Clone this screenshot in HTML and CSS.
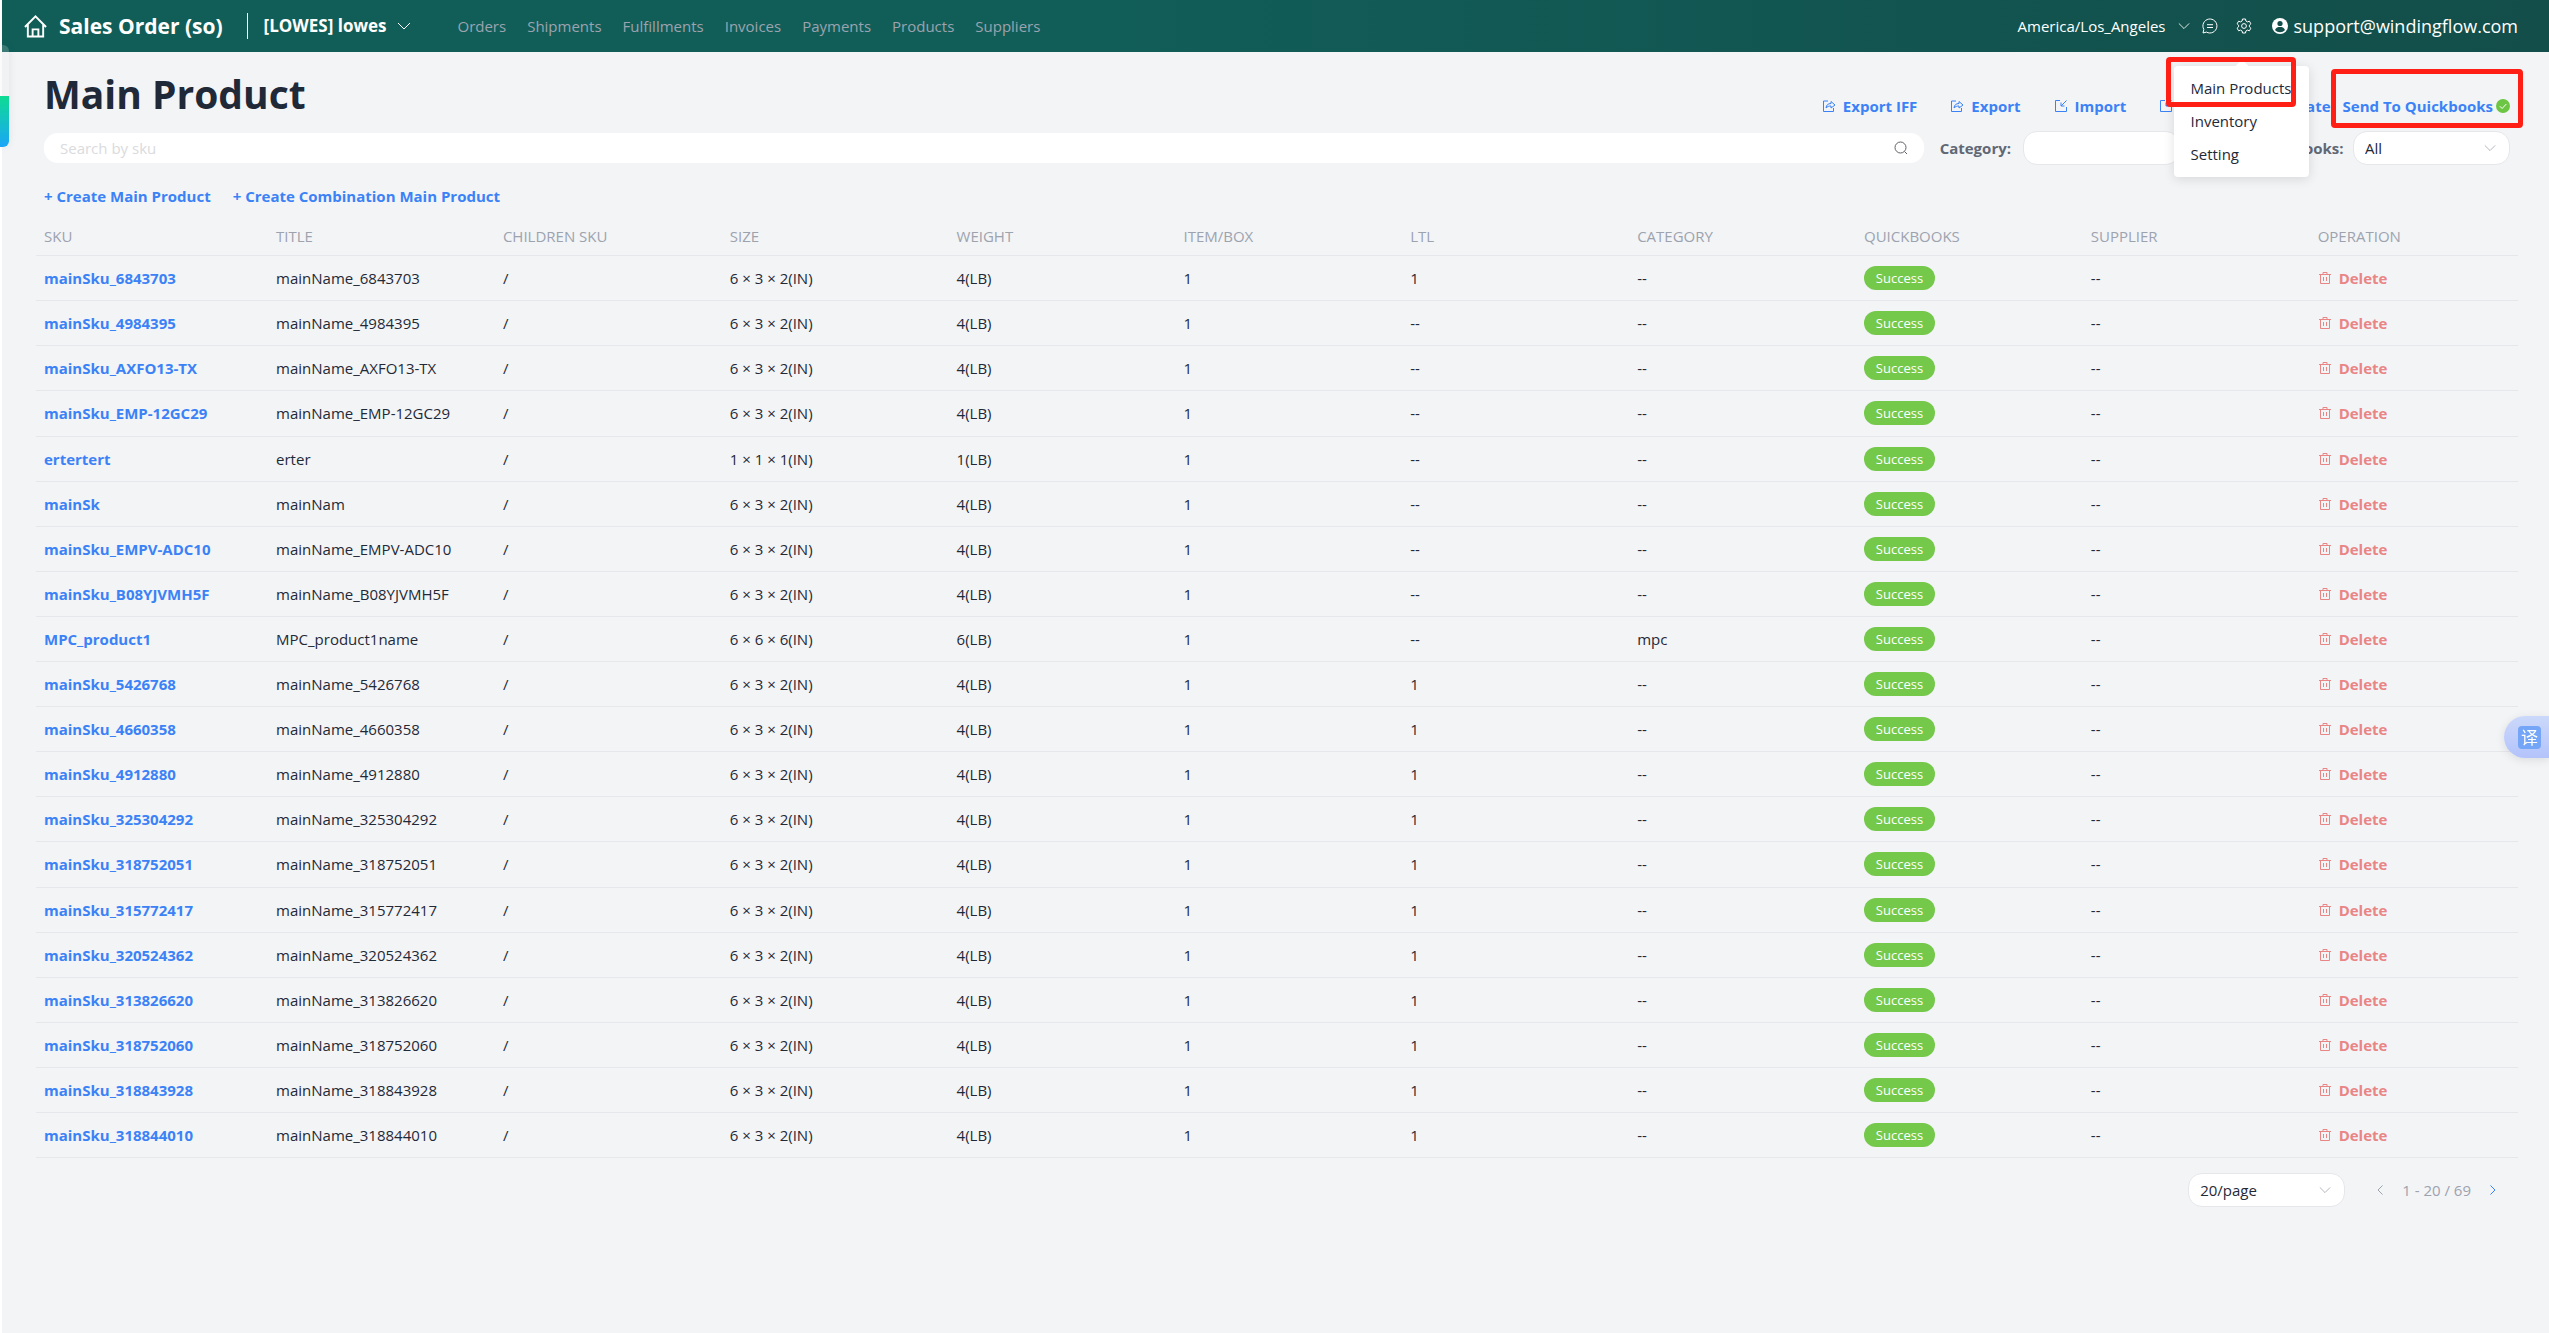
FILE: index.html
```html
<!DOCTYPE html>
<html lang="en">
<head>
<meta charset="utf-8">
<meta name="viewport" content="width=device-width, initial-scale=1">
<title>Main Product</title>
<link rel="stylesheet" href="styles.css">
</head>
<body>
<svg class="sprite" aria-hidden="true">
  <symbol id="i-down" viewBox="0 0 14 14"><path d="M1 4l6 6 6-6"/></symbol>
  <symbol id="i-left" viewBox="0 0 14 14"><path d="M9.500 2.500L5 7l4.500 4.500"/></symbol>
  <symbol id="i-right" viewBox="0 0 14 14"><path d="M4.500 2.500L9 7l-4.500 4.500"/></symbol>
  <symbol id="i-export" viewBox="0 0 14 14"><path d="M6 2H1.500v10.500h10V9M4 9c.3-3 2-4.500 5-4.500V2.500L13 6 9 9V7C7 7 5.300 7.500 4 9z"/></symbol>
  <symbol id="i-import" viewBox="0 0 14 14"><path d="M6 1.500H1.500v11h11V8M12.500 1.500L7 7M7 3.500V7h3.500"/></symbol>
  <symbol id="i-trash" viewBox="0 0 14 14"><path d="M1 3.500h12M5 3.300V1.500h4v1.800M2.500 3.500v9h9v-9M5.500 6v4M8.500 6v4"/></symbol>
</svg>

<header class="topbar">
  <a class="brand" href="#">
    <svg class="icon home" viewBox="0 0 24 24" aria-hidden="true"><path d="M1 12.500L12 1.500l11 11M4 10v12.500h16V10M9 22.500V15h6v7.500"/></svg>
    <span>Sales Order (so)</span>
  </a>
  <button class="store" type="button">[LOWES] lowes <svg class="icon"><use href="#i-down"/></svg></button>
  <nav class="nav">
    <a href="#">Orders</a><a href="#">Shipments</a><a href="#">Fulfillments</a><a href="#">Invoices</a><a href="#">Payments</a><a href="#">Products</a><a href="#">Suppliers</a>
  </nav>
  <div class="tools">
    <button class="zone" type="button">America/Los_Angeles <svg class="icon chev"><use href="#i-down"/></svg></button>
    <button class="tool" type="button" aria-label="Messages">
      <svg class="icon round" viewBox="0 0 16 16"><path d="M1 15l.8-3.600A7 7 0 1 1 4.500 14.100zM5 6.700h6M5 9.500h6"/></svg>
    </button>
    <div class="settings">
      <button class="tool" type="button" aria-label="Settings">
        <svg class="icon round" viewBox="0 0 16 16"><path d="M6.500 1h3l.4 2 1.500.9 2-.7 1.500 2.600L13.400 7.200v1.600l1.500 1.400-1.500 2.600-2-.7-1.500.9-.4 2h-3l-.4-2-1.500-.9-2 .7-1.500-2.600 1.500-1.400V7.200L1.100 5.800l1.500-2.600 2 .7L6.100 3z"/><circle cx="8" cy="8" r="2.400"/></svg>
      </button>
      <div class="menu">
        <a href="#">Main Products</a>
        <a href="#">Inventory</a>
        <a href="#">Setting</a>
        <span class="mark mark-menu"></span>
      </div>
    </div>
    <a class="account" href="#">
      <svg class="avatar" viewBox="0 0 16 16" aria-hidden="true"><circle cx="8" cy="8" r="8"/><circle class="cut" cx="8" cy="5.500" r="2.600"/><path class="cut" d="M3 12c1-2.500 3-3 5-3s4 .5 5 3c-1.500 1.500-3 2.200-5 2.200S4.500 13.500 3 12z"/></svg>
      <span>support@windingflow.com</span>
    </a>
  </div>
</header>

<main class="page">
  <div class="heading">
    <h1>Main Product</h1>
    <div class="actions">
      <button class="link" type="button"><svg class="icon"><use href="#i-export"/></svg>Export IFF</button>
      <button class="link" type="button"><svg class="icon"><use href="#i-export"/></svg>Export</button>
      <button class="link" type="button"><svg class="icon"><use href="#i-import"/></svg>Import</button>
      <button class="link" type="button"><svg class="icon"><use href="#i-import"/></svg>Download Template</button>
      <button class="link send" type="button">Send To Quickbooks<svg class="ok" viewBox="0 0 14 14"><circle cx="7" cy="7" r="7"/><path d="M3.800 7.200l2.300 2.300 4.200-4.500"/></svg><span class="mark mark-send"></span></button>
    </div>
  </div>

  <div class="filters">
    <div class="search">
      <input type="text" placeholder="Search by sku" aria-label="Search by sku">
      <svg class="icon" viewBox="0 0 14 14" aria-hidden="true"><circle cx="6.500" cy="6.500" r="5.500"/><path d="M10.500 10.500l2.500 2.500"/></svg>
    </div>
    <label for="category">Category:</label>
    <span class="picker"><select id="category"><option></option></select></span>
    <label class="qb" for="quickbooks">Quickbooks:</label>
    <span class="picker"><select id="quickbooks"><option>All</option></select><svg class="icon"><use href="#i-down"/></svg></span>
  </div>

  <div class="create">
    <button class="link" type="button">+ Create Main Product</button>
    <button class="link" type="button">+ Create Combination Main Product</button>
  </div>

  <table class="grid">
    <thead>
      <tr><th class="first">SKU</th><th>TITLE</th><th>CHILDREN SKU</th><th>SIZE</th><th>WEIGHT</th><th>ITEM/BOX</th><th>LTL</th><th>CATEGORY</th><th>QUICKBOOKS</th><th>SUPPLIER</th><th class="last">OPERATION</th></tr>
    </thead>
    <tbody id="rows"></tbody>
  </table>

  <footer class="pager">
    <span class="picker"><select aria-label="Rows per page"><option>20/page</option></select><svg class="icon"><use href="#i-down"/></svg></span>
    <div class="range">
      <button type="button" aria-label="Previous page" disabled><svg class="icon"><use href="#i-left"/></svg></button>
      <span>1 - 20 / 69</span>
      <button class="next" type="button" aria-label="Next page"><svg class="icon"><use href="#i-right"/></svg></button>
    </div>
  </footer>
</main>

<div class="side-tab"></div>
<button class="translate" type="button" aria-label="Translate"><span>译</span></button>
<script src="rows.js"></script>
</body>
</html>
```
FILE: styles.css
```css
* { box-sizing: border-box; }

body {
  margin: 0;
  min-height: 100vh;
  border-left: 2px solid #fff;
  background: #f3f4f6;
  color: #1f2937;
  font: 15px/24px "Open Sans", "Noto Sans", "Noto Sans CJK SC", sans-serif;
}

a { color: inherit; text-decoration: none; }

button, input, select {
  margin: 0;
  padding: 0;
  border: 0;
  background: none;
  color: inherit;
  font: inherit;
}

.sprite { display: none; }

.icon {
  flex: none;
  width: 14px;
  height: 14px;
  fill: none;
  stroke: currentColor;
  stroke-width: 1;
}

/* Top bar */
.topbar {
  display: flex;
  align-items: center;
  height: 52px;
  padding: 0 31px 0 22px;
  background: linear-gradient(90deg, #115e59 40%, #134e4a);
  color: #fff;
}

.brand {
  display: flex;
  align-items: center;
  gap: 12px;
  height: 26px;
  padding-right: 24px;
  border-right: 1px solid #fff;
  font-size: 21px;
  font-weight: 700;
}

.brand .home { width: 23px; height: 23px; stroke-width: 2; }

.store {
  display: flex;
  align-items: center;
  gap: 11px;
  margin-left: 16px;
  font-size: 17px;
  font-weight: 700;
}

.nav {
  display: flex;
  gap: 21px;
  margin-left: 46px;
  color: #9ca3af;
}

.tools {
  display: flex;
  align-items: center;
  gap: 18px;
  margin-left: auto;
}

.zone { display: flex; align-items: center; gap: 12px; margin-right: -6px; }
.chev { width: 12px; height: 12px; }
.tool { display: flex; }
.tool .round { width: 16px; height: 16px; }
.settings { position: relative; }

.account {
  display: flex;
  align-items: center;
  gap: 6px;
  margin-left: 2px;
  font-size: 18px;
}

.avatar { width: 16px; height: 16px; fill: #fff; }
.avatar .cut { fill: #134e4a; }

/* Settings menu opens below the gear */
.menu {
  position: absolute;
  z-index: 2;
  top: 48px;
  left: -62px;
  display: flex;
  flex-direction: column;
  width: 135px;
  padding: 6px 0;
  border-radius: 4px;
  background: #fff;
  box-shadow: 0 2px 12px rgba(0, 0, 0, .12);
  color: #1f2937;
  line-height: 23px;
}

.menu::before {
  content: "";
  position: absolute;
  top: -4px;
  left: 62px;
  width: 12px;
  height: 12px;
  border-radius: 2px;
  background: #fff;
  transform: rotate(45deg);
}

.menu a { position: relative; padding: 5px 0 5px 17px; white-space: nowrap; }

.mark {
  position: absolute;
  border: 5px solid #ff1f14;
  border-radius: 4px;
  pointer-events: none;
}

.mark-menu { inset: -9px 13px 70px -8px; }
.mark-send { inset: -25px -13px -10px -12px; }

/* Page */
.page { padding: 10px 31px 24px 34px; }

.heading {
  display: flex;
  align-items: flex-start;
  justify-content: space-between;
  padding: 0 8px;
}

h1 { margin: 0; font-size: 39px; line-height: 64px; }

.link {
  display: flex;
  align-items: center;
  gap: 7px;
  color: #3b82f6;
  font-weight: 700;
  white-space: nowrap;
}

.actions { display: flex; gap: 33px; padding-top: 32px; }
.send { position: relative; gap: 3px; margin-left: -21px; }
.ok { width: 14px; height: 14px; fill: #6cc644; }
.ok path { fill: none; stroke: #fff; stroke-width: 1; }

.filters {
  display: flex;
  align-items: center;
  height: 44px;
  padding: 0 8px;
}

.search {
  display: flex;
  flex: 1;
  align-items: center;
  height: 30px;
  margin-right: 16px;
  padding: 0 16px;
  border-radius: 14px;
  background: #fff;
  color: #606266;
}

.search input { flex: 1; outline: 0; }
.search input::placeholder { color: #d9dbde; opacity: 1; }

.filters label { margin-right: 12px; color: #606875; font-weight: 700; }
.filters .qb { width: 90px; margin-left: 71px; }

.picker {
  display: flex;
  align-items: center;
  width: 157px;
  height: 34px;
  padding: 0 13px 0 11px;
  border: 1px solid #e5e7eb;
  border-radius: 14px;
  background: #fff;
}

.picker select { flex: 1; appearance: none; outline: 0; }
.picker .icon { width: 12px; height: 12px; color: #a8abb2; }

.create { display: flex; gap: 22px; padding: 14px 8px 9px; }

/* Product table */
.grid {
  width: 100%;
  border-collapse: collapse;
  table-layout: fixed;
}

.grid th, .grid td {
  height: 45px;
  padding: 0 8px;
  border-bottom: 1px solid #e5e7eb;
  text-align: left;
}

.grid thead th {
  height: 38px;
  width: 9.140%;
  color: #9ca3af;
  font-weight: 400;
}

.grid th.first { width: 9.350%; }
.grid th.last { width: auto; }
.grid td a { color: #3b82f6; font-weight: 700; }
.grid tr:nth-child(10n+4) td { height: 46px; }

.tag {
  display: block;
  width: 71px;
  border-radius: 12px;
  background: #74c84a;
  color: #fff;
  font-size: 13px;
  text-align: center;
}

.delete {
  display: flex;
  align-items: center;
  gap: 7px;
  color: #e98585;
  font-weight: 700;
}

/* Pager */
.pager {
  display: flex;
  align-items: center;
  justify-content: flex-end;
  padding: 15px 18px 0 0;
}

.range {
  display: flex;
  align-items: center;
  gap: 15px;
  margin-left: 28px;
  color: #9ca3af;
}

.range button { display: flex; }
.range .next { color: #3b82f6; }

/* Floating widgets at the window edges */
.side-tab {
  position: fixed;
  top: 45px;
  left: 0;
  width: 9px;
  height: 102px;
  border-radius: 0 6px 6px 0;
  background: linear-gradient(#e9eaec33 51px, #0edc93 51px, #1aa5f8);
  box-shadow: 0 0 8px rgba(0, 0, 0, .08);
}

.translate {
  position: fixed;
  top: 716px;
  right: 0;
  display: flex;
  align-items: center;
  width: 45px;
  height: 42px;
  padding-left: 14px;
  border-radius: 21px 0 0 21px;
  background: linear-gradient(#cbd8fb, #b3c3fb);
  box-shadow: 0 2px 10px rgba(0, 0, 0, .1);
}

.translate span {
  width: 23px;
  border-radius: 4px;
  background: #74a5f6;
  color: #fff;
  font-size: 17px;
  line-height: 23px;
  text-align: center;
}
```
FILE: rows.js
```js
const S = "6 × 3 × 2(IN)";
const products = [
  ["mainSku_6843703", "mainName_6843703", S, "4(LB)", "1"],
  ["mainSku_4984395", "mainName_4984395", S, "4(LB)", "--"],
  ["mainSku_AXFO13-TX", "mainName_AXFO13-TX", S, "4(LB)", "--"],
  ["mainSku_EMP-12GC29", "mainName_EMP-12GC29", S, "4(LB)", "--"],
  ["ertertert", "erter", "1 × 1 × 1(IN)", "1(LB)", "--"],
  ["mainSk", "mainNam", S, "4(LB)", "--"],
  ["mainSku_EMPV-ADC10", "mainName_EMPV-ADC10", S, "4(LB)", "--"],
  ["mainSku_B08YJVMH5F", "mainName_B08YJVMH5F", S, "4(LB)", "--"],
  ["MPC_product1", "MPC_product1name", "6 × 6 × 6(IN)", "6(LB)", "--", "mpc"],
  ["mainSku_5426768", "mainName_5426768", S, "4(LB)", "1"],
  ["mainSku_4660358", "mainName_4660358", S, "4(LB)", "1"],
  ["mainSku_4912880", "mainName_4912880", S, "4(LB)", "1"],
  ["mainSku_325304292", "mainName_325304292", S, "4(LB)", "1"],
  ["mainSku_318752051", "mainName_318752051", S, "4(LB)", "1"],
  ["mainSku_315772417", "mainName_315772417", S, "4(LB)", "1"],
  ["mainSku_320524362", "mainName_320524362", S, "4(LB)", "1"],
  ["mainSku_313826620", "mainName_313826620", S, "4(LB)", "1"],
  ["mainSku_318752060", "mainName_318752060", S, "4(LB)", "1"],
  ["mainSku_318843928", "mainName_318843928", S, "4(LB)", "1"],
  ["mainSku_318844010", "mainName_318844010", S, "4(LB)", "1"]
];

document.getElementById("rows").innerHTML = products.map(
  ([sku, title, size, weight, ltl, category = "--"]) => `<tr>
    <td><a href="#">${sku}</a></td><td>${title}</td><td>/</td><td>${size}</td>
    <td>${weight}</td><td>1</td><td>${ltl}</td><td>${category}</td>
    <td><span class="tag">Success</span></td><td>--</td>
    <td><button class="delete" type="button"><svg class="icon"><use href="#i-trash"/></svg>Delete</button></td>
  </tr>`
).join("");
```
